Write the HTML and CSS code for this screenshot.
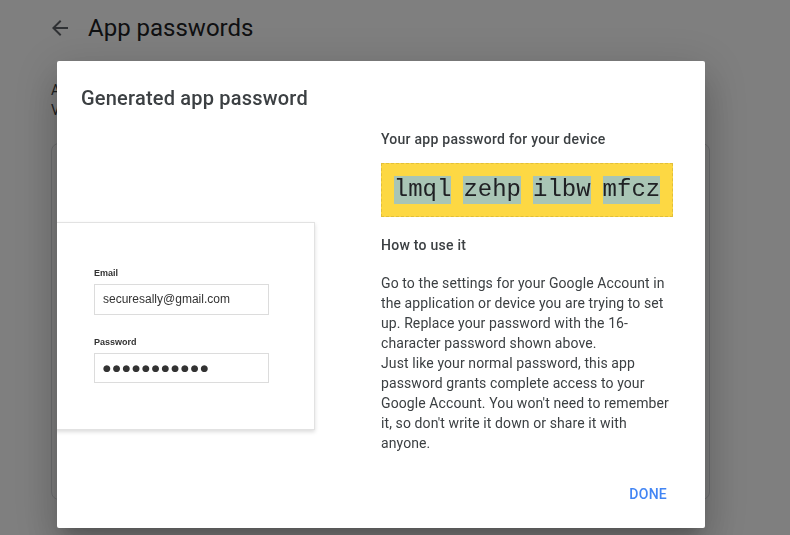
FILE: index.html
```html
<!DOCTYPE html>
<html lang="en">
<head>
<meta charset="utf-8">
<title>App passwords</title>
<link rel="stylesheet" href="styles.css">
</head>
<body>
<div class="page">
  <header class="topbar">
    <svg class="back" viewBox="0 0 24 24" width="24" height="24"><path d="M20 11H7.83l5.59-5.59L12 4l-8 8 8 8 1.41-1.41L7.83 13H20v-2z"/></svg>
    <h1>App passwords</h1>
  </header>
  <p class="intro">App passwords let you sign in to your Google Account from apps on devices that don't support 2-Step<br>Verification. You'll only need to enter it once so you don't need to remember it.</p>
  <div class="panel"></div>
</div>
<div class="scrim"></div>
<div class="dialog">
  <h2 class="dialog-title">Generated app password</h2>
  <div class="dialog-body">
    <div class="illustration">
      <div class="mock-card">
        <div class="mock-label">Email</div>
        <div class="mock-input">securesally@gmail.com</div>
        <div class="mock-label pw-label">Password</div>
        <div class="mock-input dots">●●●●●●●●●●●</div>
      </div>
    </div>
    <div class="info">
      <h3 class="info-title">Your app password for your device</h3>
      <div class="pw-box"><span>lmql</span><span>zehp</span><span>ilbw</span><span>mfcz</span></div>
      <h3 class="info-title how">How to use it</h3>
      <p class="info-text">Go to the settings for your Google Account in the application or device you are trying to set up. Replace your password with the 16-character password shown above.<br>Just like your normal password, this app password grants complete access to your Google Account. You won't need to remember it, so don't write it down or share it with anyone.</p>
    </div>
  </div>
  <div class="actions"><button class="done">DONE</button></div>
</div>
</body>
</html>
```
FILE: styles.css
```css
html, body {
  margin: 0;
  padding: 0;
  background: #fff;
  font-family: Roboto, "Noto Sans", Arial, sans-serif;
  color: #202124;
  overflow: hidden;
}

.page {
  width: 790px;
  height: 535px;
}

.topbar {
  display: flex;
  align-items: center;
  height: 56px;
  padding-left: 48px;
}

.back {
  fill: #5f6368;
  display: block;
}

.topbar h1 {
  margin: 0 0 0 16px;
  font-size: 24px;
  font-weight: 400;
  line-height: 32px;
  color: #202124;
}

.intro {
  margin: 24px 0 0 51px;
  font-size: 14px;
  line-height: 20px;
  color: #3c4043;
  white-space: nowrap;
}

.panel {
  margin: 23px 0 0 51px;
  width: 659px;
  height: 357px;
  box-sizing: border-box;
  border: 1px solid #dadce0;
  border-radius: 8px;
}

.scrim {
  position: fixed;
  inset: 0;
  background: rgba(0, 0, 0, 0.5);
}

.dialog {
  position: fixed;
  left: 57px;
  top: 61px;
  width: 648px;
  height: 467px;
  background: #fff;
  border-radius: 2px;
  overflow: hidden;
  box-shadow: 0 11px 15px -7px rgba(0,0,0,.2), 0 24px 38px 3px rgba(0,0,0,.14), 0 9px 46px 8px rgba(0,0,0,.12);
  display: flex;
  flex-direction: column;
}

.dialog-title {
  margin: 0;
  padding: 25px 24px 0;
  font-size: 20px;
  line-height: 24px;
  font-weight: 500;
  letter-spacing: 0.2px;
  color: #3c4043;
}

.dialog-body {
  display: grid;
  grid-template-columns: 324px 292px;
  padding-top: 19px;
}

.mock-card {
  margin: 93px 0 0 -22px;
  width: 280px;
  box-sizing: border-box;
  padding: 45px 0 46px 58px;
  background: #fff;
  border: 1px solid #e2e2e2;
  box-shadow: 0 2px 4px rgba(0,0,0,.14);
  font-family: "Liberation Sans", Arial, sans-serif;
}

.mock-label {
  font-size: 9px;
  line-height: 11px;
  font-weight: 700;
  color: #333;
}

.pw-label {
  margin-top: 22px;
}

.mock-input {
  margin-top: 5px;
  width: 175px;
  height: 31px;
  box-sizing: border-box;
  border: 1px solid #dcdcdc;
  padding-left: 8px;
  font-size: 12px;
  line-height: 29px;
  color: #333;
}

.dots {
  height: 30px;
  font-family: "DejaVu Sans", sans-serif;
  font-size: 9px;
  letter-spacing: 1.9px;
  line-height: 28px;
  color: #333;
}

.info-title {
  margin: 0;
  font-size: 14px;
  line-height: 20px;
  font-weight: 500;
  letter-spacing: 0.25px;
  color: #3c4043;
}

.pw-box {
  margin-top: 14px;
  display: flex;
  justify-content: center;
  gap: 12px;
  padding: 12px 0;
  background: #fdd843;
  border: 1px dashed #e2bf3a;
}

.pw-box span {
  font-family: "Liberation Mono", "Courier New", monospace;
  font-size: 24px;
  line-height: 28px;
  background: #a9c5b5;
  color: #202124;
}

.how {
  margin-top: 18px;
}

.info-text {
  margin: 18px 0 0;
  font-size: 14px;
  line-height: 20px;
  letter-spacing: 0.1px;
  color: #3c4043;
}

.actions {
  display: flex;
  justify-content: flex-end;
  margin-top: auto;
  padding: 0 30px 16px 0;
}

.done {
  height: 36px;
  padding: 0 8px;
  background: none;
  border: 0;
  font-family: Roboto, Arial, sans-serif;
  font-size: 14px;
  font-weight: 500;
  letter-spacing: 0.25px;
  color: #4285f4;
}
```
